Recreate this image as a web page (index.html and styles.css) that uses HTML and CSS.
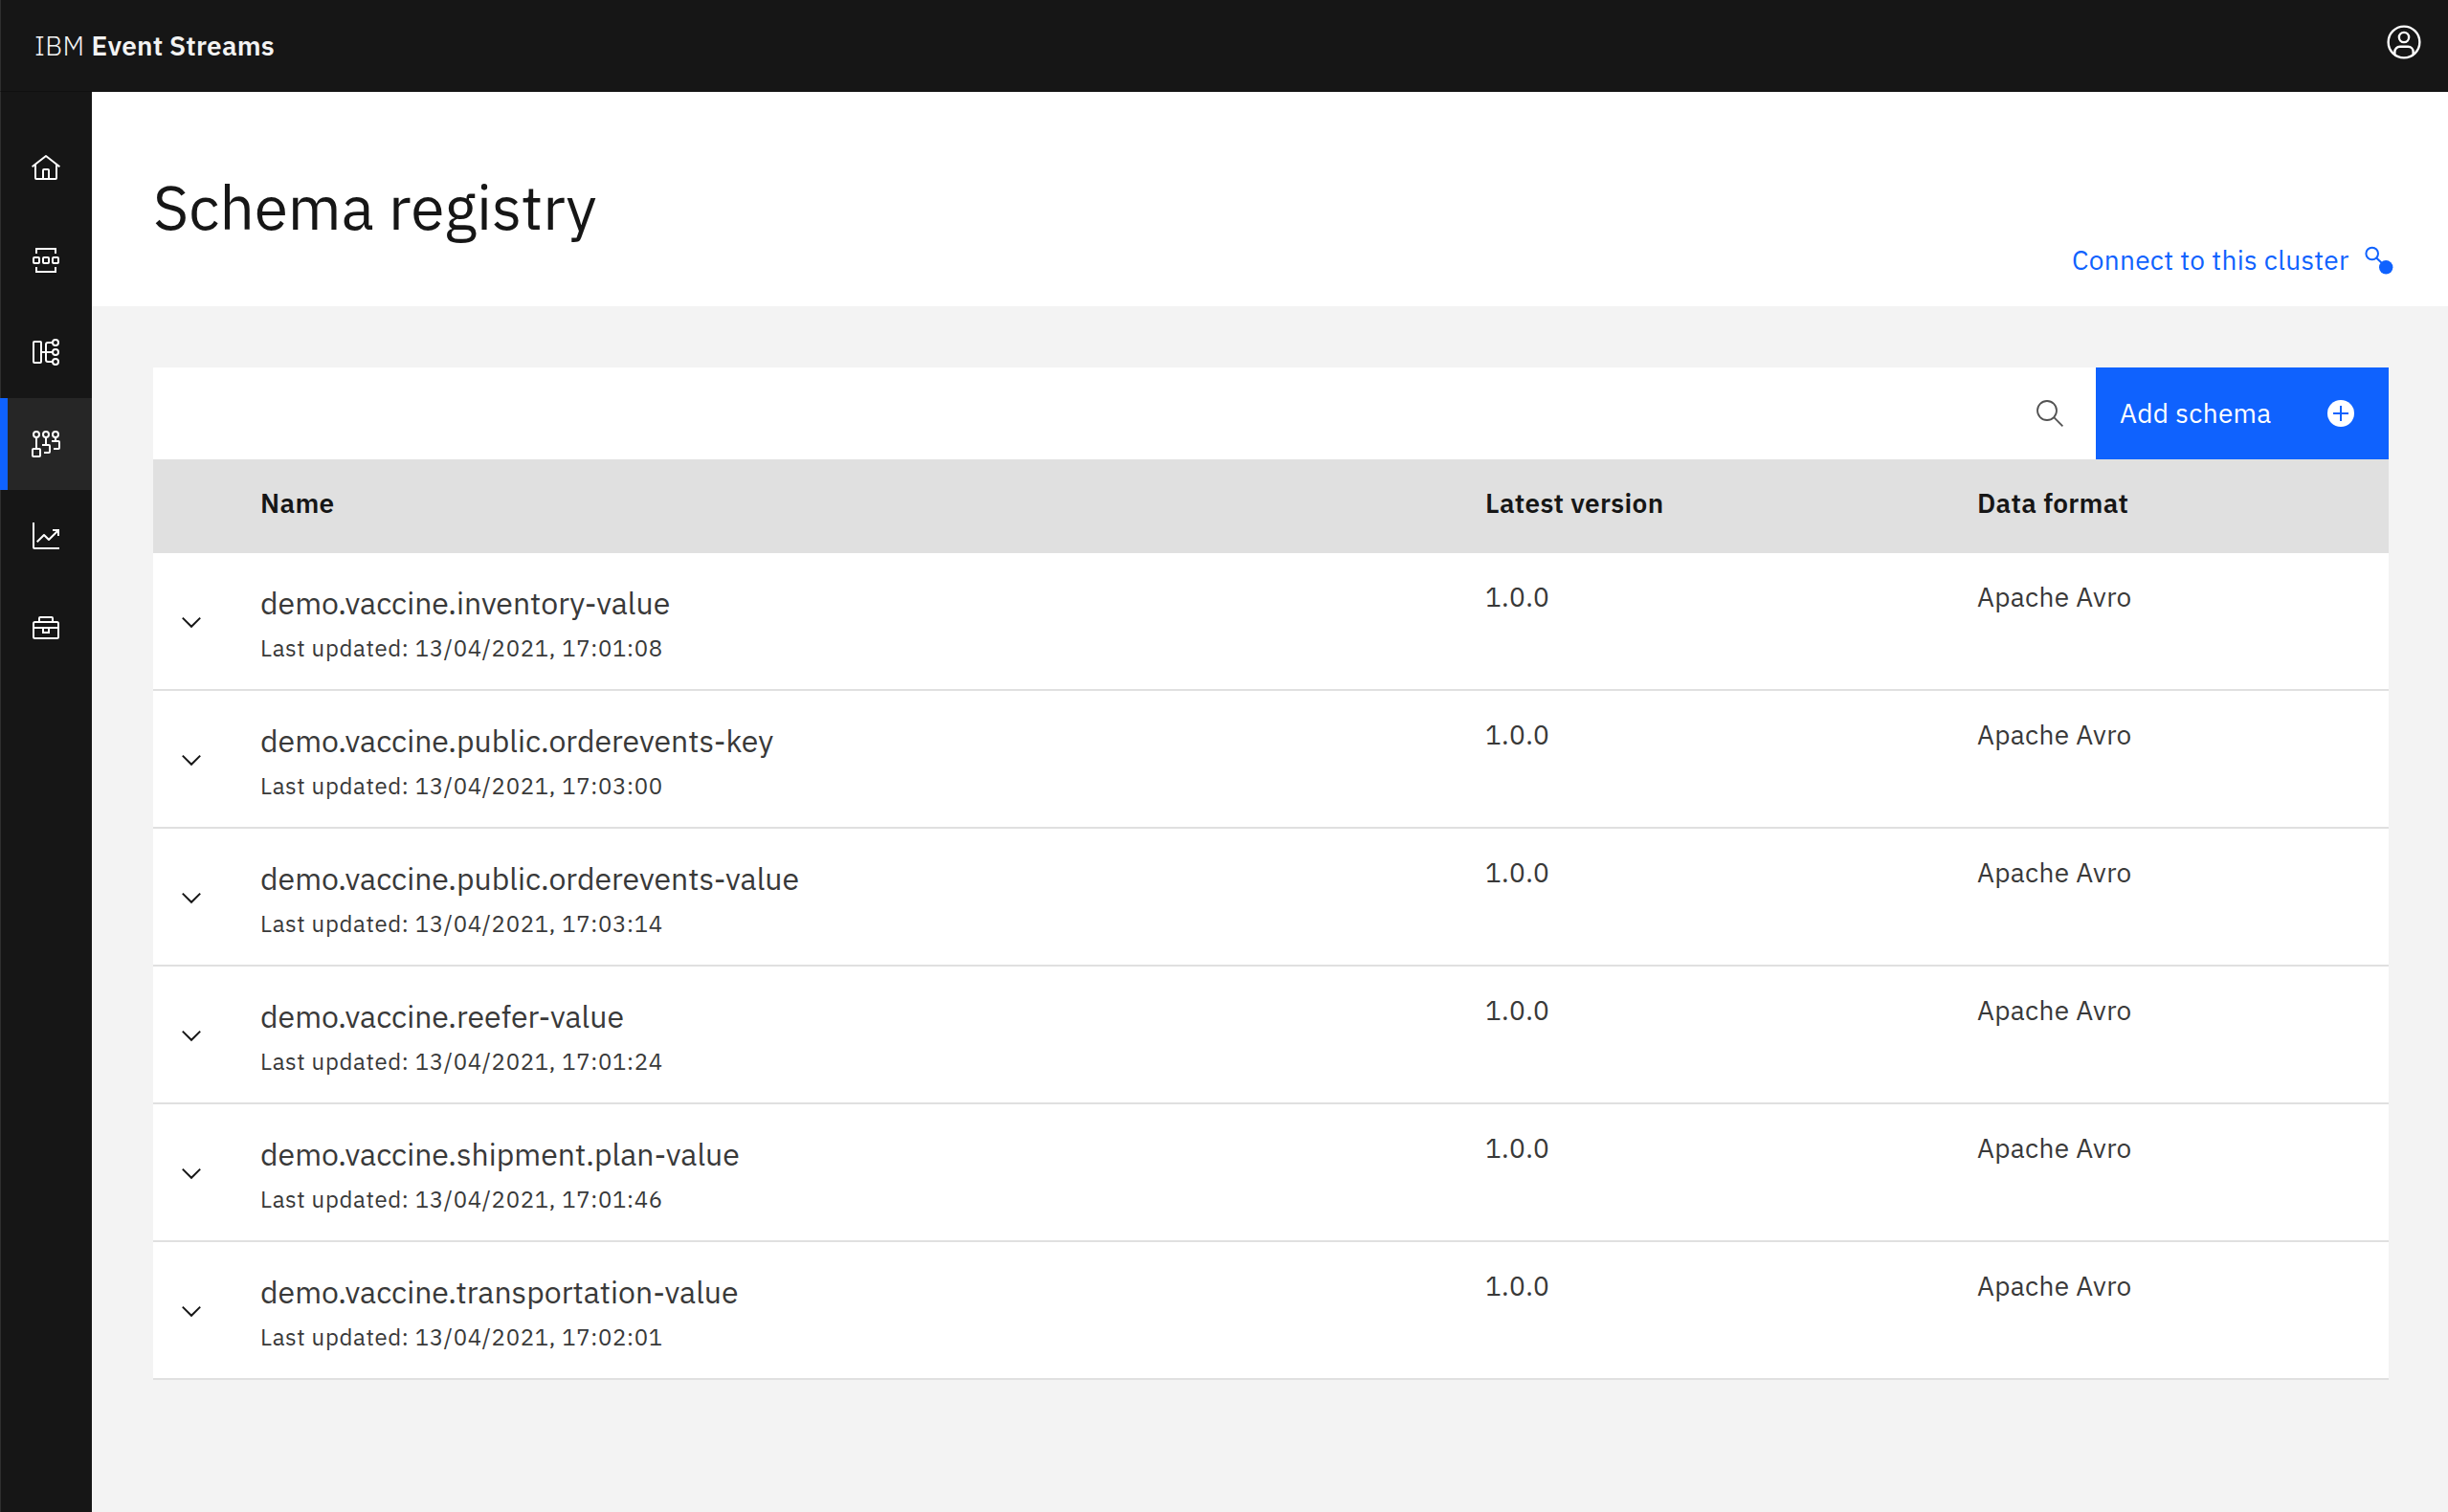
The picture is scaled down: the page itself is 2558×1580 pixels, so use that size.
FILE: index.html
```html
<!DOCTYPE html>
<html lang="en">
<head>
<meta charset="utf-8">
<title>Schema registry</title>
<link rel="stylesheet" href="styles.css">
</head>
<body>
<svg class="sprite" aria-hidden="true">
  <symbol id="chevron" viewBox="0 0 32 32"><path d="M6.8 11.6L16 20.8l9.2-9.2" fill="none" stroke="#161616" stroke-width="2"/></symbol>
</svg>
<header class="header">
  <div class="brand"><span class="brand-prefix">IBM</span><span class="brand-name">Event Streams</span></div>
  <svg class="avatar" viewBox="0 0 32 32" fill="none" stroke="#fff" stroke-width="1.9"><circle cx="16" cy="16" r="13.1"/><circle cx="16" cy="12" r="4.1"/><path d="M8.3 26.3V24a4.2 4.2 0 0 1 4.2-4.2h7a4.2 4.2 0 0 1 4.2 4.2v2.3"/></svg>
</header>
<div class="shell">
  <nav class="sidebar">
    <a class="nav-item"><svg class="icon" viewBox="0 0 32 32" fill="#fff"><path d="M16.61 2.21a1.01 1.01 0 0 0-1.24 0L1 13.42l1.24 1.57L4 13.62V26a2 2 0 0 0 2 2h20a2 2 0 0 0 2-2V13.63L29.76 15 31 13.43ZM18 26h-4v-8h4Zm2 0v-8a2 2 0 0 0-2-2h-4a2 2 0 0 0-2 2v8H6V12.06l10-7.79 10 7.8V26Z"/></svg></a>
    <a class="nav-item"><svg class="icon line" viewBox="0 0 32 32"><path d="M6 9V4h20v5M6 23v5h20v-5"/><rect x="3" y="13" width="6" height="6" rx="1"/><rect x="13" y="13" width="6" height="6" rx="1"/><rect x="23" y="13" width="6" height="6" rx="1"/></svg></a>
    <a class="nav-item"><svg class="icon line" viewBox="0 0 32 32"><rect x="3" y="5" width="8" height="22" rx="1"/><path d="M12 16h11M23 6h-5a2 2 0 0 0-2 2v16a2 2 0 0 0 2 2h5"/><circle cx="26" cy="6" r="3"/><circle cx="26" cy="16" r="3"/><circle cx="26" cy="26" r="3"/></svg></a>
    <a class="nav-item active"><svg class="icon line" viewBox="0 0 32 32"><circle cx="6" cy="6" r="3"/><circle cx="16" cy="6" r="3"/><circle cx="26" cy="6" r="3"/><path d="M6 9v12M16 9v8M26 9v4M12 17h7a1 1 0 0 1 1 1v6a1 1 0 0 1-1 1h-5M22 13h7a1 1 0 0 1 1 1v6a1 1 0 0 1-1 1h-5"/><rect x="2" y="21" width="8" height="8" rx="1"/></svg></a>
    <a class="nav-item"><svg class="icon" viewBox="0 0 32 32" fill="#fff"><path d="M4 2H2v26a2 2 0 0 0 2 2h26v-2H4Z"/><path d="M30 9h-7v2h3.59L19 18.59l-4.29-4.3a1 1 0 0 0-1.42 0L6 21.59 7.41 23 14 16.41l4.29 4.3a1 1 0 0 0 1.42 0L28 12.41V16h2Z"/></svg></a>
    <a class="nav-item"><svg class="icon line" viewBox="0 0 32 32"><rect x="3" y="10" width="26" height="17" rx="1.5"/><path d="M9 10V6a1 1 0 0 1 1-1h12a1 1 0 0 1 1 1v4M3 16h26M13 16v5h6v-5"/></svg></a>
  </nav>
  <main class="main">
    <section class="hero">
      <h1 class="title">Schema registry</h1>
      <a class="connect"><span class="connect-label">Connect to this cluster</span><svg class="icon" viewBox="0 0 32 32"><circle cx="8.7" cy="9" r="6.3" fill="none" stroke="#0f62fe" stroke-width="2"/><path d="M13.2 13.5L20 20" stroke="#0f62fe" stroke-width="2"/><circle cx="23.2" cy="23.3" r="7.2" fill="#0f62fe"/></svg></a>
    </section>
    <section class="content">
      <div class="toolbar">
        <div class="search"><svg class="icon" viewBox="0 0 32 32" fill="none" stroke="#525252" stroke-width="1.8"><circle cx="13" cy="13" r="10"/><path d="M20.2 20.2l9.2 9.2"/></svg></div>
        <button class="add"><span class="add-label">Add schema</span><svg class="icon" viewBox="0 0 32 32"><circle cx="16" cy="16" r="14" fill="#fff"/><path d="M16 8v16M8 16h16" stroke="#0f62fe" stroke-width="2"/></svg></button>
      </div>
      <div class="table">
        <div class="table-head"><span></span><span>Name</span><span>Latest version</span><span>Data format</span></div>
        <div class="row"><svg class="icon chevron"><use href="#chevron"/></svg><div class="schema"><div class="name">demo.vaccine.inventory-value</div><div class="updated">Last updated: 13/04/2021, 17:01:08</div></div><div class="cell">1.0.0</div><div class="cell">Apache Avro</div></div>
        <div class="row"><svg class="icon chevron"><use href="#chevron"/></svg><div class="schema"><div class="name">demo.vaccine.public.orderevents-key</div><div class="updated">Last updated: 13/04/2021, 17:03:00</div></div><div class="cell">1.0.0</div><div class="cell">Apache Avro</div></div>
        <div class="row"><svg class="icon chevron"><use href="#chevron"/></svg><div class="schema"><div class="name">demo.vaccine.public.orderevents-value</div><div class="updated">Last updated: 13/04/2021, 17:03:14</div></div><div class="cell">1.0.0</div><div class="cell">Apache Avro</div></div>
        <div class="row"><svg class="icon chevron"><use href="#chevron"/></svg><div class="schema"><div class="name">demo.vaccine.reefer-value</div><div class="updated">Last updated: 13/04/2021, 17:01:24</div></div><div class="cell">1.0.0</div><div class="cell">Apache Avro</div></div>
        <div class="row"><svg class="icon chevron"><use href="#chevron"/></svg><div class="schema"><div class="name">demo.vaccine.shipment.plan-value</div><div class="updated">Last updated: 13/04/2021, 17:01:46</div></div><div class="cell">1.0.0</div><div class="cell">Apache Avro</div></div>
        <div class="row"><svg class="icon chevron"><use href="#chevron"/></svg><div class="schema"><div class="name">demo.vaccine.transportation-value</div><div class="updated">Last updated: 13/04/2021, 17:02:01</div></div><div class="cell">1.0.0</div><div class="cell">Apache Avro</div></div>
      </div>
    </section>
  </main>
</div>
</body>
</html>
```
FILE: styles.css
```css
* { box-sizing: border-box; }

body {
  margin: 0;
  height: 1580px;
  display: flex;
  flex-direction: column;
  overflow: hidden;
  background: #f3f3f3;
  color: #161616;
  font-family: "IBM Plex Sans", "Open Sans", "Noto Sans", sans-serif;
  font-size: 28px;
  line-height: 41px;
  letter-spacing: 0.32px;
}

.sprite { display: none; }
.icon { display: block; width: 32px; height: 32px; flex: none; }
.line { fill: none; stroke: #fff; stroke-width: 2; }

.header {
  height: 96px;
  flex: none;
  display: flex;
  justify-content: space-between;
  align-items: flex-start;
  padding: 24px 26px 0 35px;
  background: #161616;
  border-left: 1px solid #2f2f2f;
  border-bottom: 1px solid #101010;
  color: #f3f3f3;
}
.brand { display: flex; padding-top: 3px; letter-spacing: 0.2px; }
.brand-prefix { width: 59.5px; font-weight: 300; letter-spacing: 0.4px; }
.brand-name { font-weight: 600; }
.avatar { display: block; width: 40px; height: 40px; }

.shell { flex: 1; display: flex; }

.sidebar {
  width: 96px;
  flex: none;
  padding-top: 32px;
  background: #161616;
  box-shadow: inset 1px 0 #2f2f2f;
}
.nav-item {
  height: 96px;
  display: flex;
  align-items: center;
  justify-content: center;
}
.nav-item.active { background: #262626; box-shadow: inset 8px 0 #0f62fe; }

.main { flex: 1; }

.hero {
  height: 224px;
  display: flex;
  justify-content: space-between;
  padding: 78px 56px 0 64px;
  background: #fff;
}
.title {
  margin: 0;
  font-size: 64px;
  font-weight: 400;
  line-height: 84px;
  letter-spacing: 0;
}
.connect {
  display: flex;
  align-items: center;
  height: 42px;
  margin-top: 77px;
  color: #0f62fe;
}
.connect-label { width: 305px; padding-bottom: 1px; }

.content { padding: 64px 62px 0 64px; }

.toolbar { height: 96px; display: flex; }
.search {
  flex: 1;
  display: flex;
  align-items: center;
  justify-content: flex-end;
  padding-right: 32px;
  background: #fff;
}
.add {
  width: 306px;
  display: flex;
  align-items: center;
  justify-content: space-between;
  padding: 0 34px 0 25px;
  border: 0;
  background: #0f62fe;
  color: #fff;
  font: inherit;
  letter-spacing: inherit;
}
.add-label { padding-bottom: 1px; }

.table-head, .row {
  display: grid;
  grid-template-columns: 112px 1280px 514px 1fr;
  align-items: start;
}
.table-head {
  height: 98px;
  padding-top: 25px;
  background: #e0e0e0;
  font-weight: 600;
}
.row {
  height: 144px;
  background: #fff;
  border-bottom: 2px solid #e0e0e0;
  color: #393939;
}
.chevron { margin: 56px 0 0 24px; }
.schema { padding-top: 31px; }
.name { font-size: 32px; line-height: 42px; letter-spacing: 0; }
.updated {
  margin-top: 10px;
  font-size: 24px;
  line-height: 32px;
  letter-spacing: 0.64px;
}
.cell { padding-top: 25px; }
```
